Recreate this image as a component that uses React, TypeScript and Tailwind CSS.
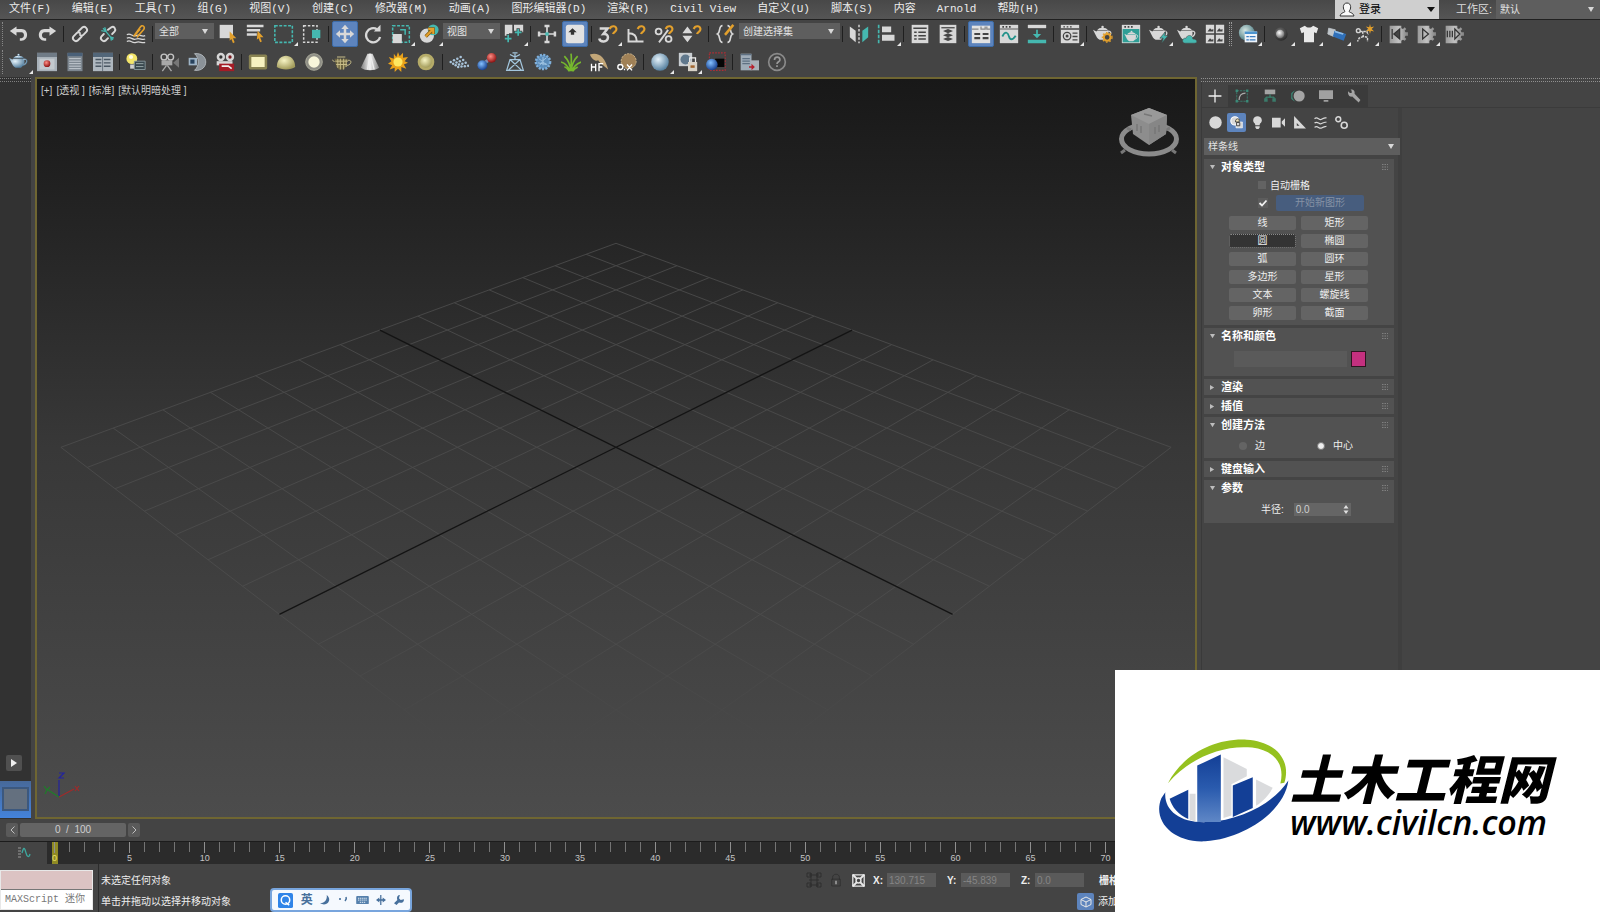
import React, { useState } from "react";
import type { ReactNode } from "react";

const L = "#d8d8d8";
const T = "#45b8b0";
const O = "#e3a02c";
const D = "#444444";

function Svg({ children, className = "h-6 w-6" }: { children: ReactNode; className?: string }) {
  return (
    <svg viewBox="0 0 24 24" className={className} fill="none" aria-hidden="true">
      {children}
    </svg>
  );
}

function Pot({ fill = L }: { fill?: string }) {
  return (
    <>
      <path d="M5 8h13c2 5-1 9-4 11H8c-3-1-4-4-5-6L0 7l4 2z" fill={fill} />
      <path d="M17 9c6-2 6 5-1 7" stroke={fill} strokeWidth="1.6" />
      <path d="M5 7.500c2-4 11-4 13 0z" fill={fill} />
      <circle cx="11.500" cy="3.500" r="1.500" fill={fill} />
    </>
  );
}

function Gear({ children }: { children: ReactNode }) {
  return (
    <>
      <path
        d="M2 2h14v3l2 1 2-2 2 2-2 2 1 2h3v4h-3l-1 2 2 2-2 2-2-1-2 1v3H2z"
        fill="url(#metal)"
      />
      {children}
    </>
  );
}

function Magnet() {
  return <path d="M14 6c2-5 9-4 8 1 0 2-3 2-4 5" stroke={O} strokeWidth="2.600" />;
}

const icons: Record<string, ReactNode> = {
  undo: <path d="M9 3v3h6c9 0 9 14 0 14h-2v-3h2c4 0 4-7 0-7H9v4L1 8.500z" fill={L} />,
  redo: <path d="M15 3v3H9c-9 0-9 14 0 14h2v-3H9c-4 0-4-7 0-7h6v4l8-5.500z" fill={L} />,
  link: (
    <g stroke={L} strokeWidth="2.300" strokeLinecap="round">
      <path d="m10 9 5-5c3-2 7 2 5 5l-4 4c-1 1-3 1-4 0" />
      <path d="m14 15-5 5c-3 2-7-2-5-5l4-4c1-1 3-1 4 0" />
    </g>
  ),
  unlink: (
    <>
      <g stroke={L} strokeWidth="2.300" strokeLinecap="round">
        <path d="m12 7 4-3c3-2 6 2 4 5l-3 3" />
        <path d="m12 17-3 3c-3 2-7-2-5-5l3-3" />
      </g>
      <path d="m6 5 12 14M8 4l2 5M4 8l5 1M14 15l5 2M15 15l1 5" stroke={T} strokeWidth="1.500" />
    </>
  ),
  bind: (
    <>
      <path
        d="M1 13c5-3 6 3 11 1s7 2 11 0M1 17c5-3 6 3 11 1s7 2 11 0M1 21c5-3 6 3 11 1s7 2 11 0"
        stroke={L}
        strokeWidth="1.500"
      />
      <path d="m9 15 8-11c2-4 7-1 4 3l-8 9m-2-3 6-7" stroke={O} strokeWidth="2" />
    </>
  ),
  select: (
    <>
      <path d="M2 1h16v16H2z" fill={L} />
      <path d="m14 9 8 8h-4l2 5-2 1-2-5-2 2z" fill={O} />
    </>
  ),
  byname: (
    <>
      <path d="M1 1h20v3H1zM1 6h16v3H1zM1 11h12v3H1z" fill={L} />
      <path d="m14 8 7 8h-4l2 5-2 1-2-5-2 2z" fill={O} />
    </>
  ),
  rect: <rect x="1" y="2" width="21" height="20" stroke={T} strokeWidth="1.900" strokeDasharray="3.500 1.800" />,
  crossing: (
    <>
      <rect x="2" y="2" width="16" height="20" stroke={L} strokeWidth="1.800" strokeDasharray="3 2" />
      <path d="M12 7h10v10H12z" fill={T} />
    </>
  ),
  move: <path d="m12 1 4.500 5h-3v4.500H18v-3l5 4.500-5 4.500v-3h-4.500V18h3L12 23l-4.500-5h3v-4.500H6v3L1 12l5-4.500v3h4.500V6h-3z" fill={L} />,
  rotate: (
    <>
      <path d="M17 6.500a8.500 8.500 0 1 0 3.500 9" stroke={L} strokeWidth="2.800" />
      <path d="M13 9h8V1z" fill={L} />
    </>
  ),
  scale: (
    <>
      <rect x="2" y="2" width="20" height="20" stroke={T} strokeWidth="1.800" strokeDasharray="3.500 1.800" />
      <path d="M2 12h11v11H2z" fill={L} />
      <path d="M11 7h6v6" stroke={T} strokeWidth="1.800" />
    </>
  ),
  place: (
    <>
      <circle cx="9.500" cy="14" r="8.500" fill={L} />
      <circle cx="17" cy="7" r="6.500" fill={T} />
      <path d="m8 15 9-9m-6 0h6v6" stroke="#8a5f12" strokeWidth="4" />
      <path d="m8 15 9-9m-6 0h6v6" stroke={O} strokeWidth="2.200" />
    </>
  ),
  pivot: (
    <>
      <path d="M1 1h9v10H6v3H1zM12 1h11v9h-5v3l-6-3z" fill={L} />
      <path d="M5 12v11M0 17.500h10M17 5v10M12 10h10" stroke={D} strokeWidth="4" />
      <path d="M5 13v9M1 17.500h8M17 6v8M13 10h8" stroke={T} strokeWidth="2" />
    </>
  ),
  manip: (
    <>
      <path d="M12 2v20M2 12h20" stroke={L} strokeWidth="2" />
      <path d="M10 10h4v4h-4z" fill={T} />
      <path d="M9 1h6v3H9zM9 20h6v3H9zM1 9h3v6H1zM20 9h3v6h-3z" fill={L} />
    </>
  ),
  keyboard: (
    <>
      <rect x="1" y="1" width="22" height="22" rx="3" fill="#e2e2e2" />
      <path d="m9 5 5 5h-3v3H7v-3H4z" fill="#333" />
    </>
  ),
  snap3: (
    <>
      <path d="M2 5.500h9.500L6.500 12c8-1 6.500 9.500 0 9-3 0-4.500-1-5-3.500" stroke={L} strokeWidth="3" />
      <Magnet />
    </>
  ),
  angle: (
    <>
      <path d="M3 6v15h18M3 11c7 0 10 4 10 10" stroke={L} strokeWidth="2.300" />
      <Magnet />
    </>
  ),
  percent: (
    <>
      <circle cx="5.500" cy="9" r="3.500" stroke={L} strokeWidth="2.200" />
      <circle cx="17.500" cy="18" r="3.500" stroke={L} strokeWidth="2.200" />
      <path d="M17 7 6 22" stroke={L} strokeWidth="2.200" />
      <Magnet />
    </>
  ),
  spinsnap: (
    <>
      <path d="m6.500 3 6 8h-12zM6.500 22l6-8h-12z" fill={L} />
      <Magnet />
    </>
  ),
  sets: (
    <>
      <path d="M9 2C4 2 7 10 3 12c4 2 1 10 6 10M15 2c5 0 2 8 6 10-4 2-1 10-6 10" stroke={L} strokeWidth="2" />
      <path d="m12 13 10-12" stroke={O} strokeWidth="3" />
    </>
  ),
  mirror: (
    <>
      <path d="m1 3 7 5v14l-7-6z" fill={L} />
      <path d="m23 3-7 5v14l7-6z" fill={T} />
      <path d="M12 1v22" stroke={L} strokeWidth="1.700" strokeDasharray="3 2" />
    </>
  ),
  align: (
    <>
      <path d="M2 1v22" stroke={T} strokeWidth="2" strokeDasharray="4 2" />
      <path d="M6 3h11v7H6zM6 13h15v7H6z" fill={L} />
    </>
  ),
  explorer: (
    <>
      <path d="M2 1h20v22H2z" fill={L} />
      <path d="M4 5h16M5 10h3m2 0h9M5 14h3m2 0h9M5 18h3m2 0h9" stroke={D} strokeWidth="1.800" />
    </>
  ),
  layers: (
    <>
      <path d="M2 1h20v22H2z" fill={L} />
      <path d="M4 4.500h16" stroke={D} strokeWidth="1.500" />
      <path d="m12 6 6 2.500-6 2.500-6-2.500zM12 11l6 2.500-6 2.500-6-2.500zM12 15.500l6 2.500-6 2.500-6-2.500z" fill={D} />
    </>
  ),
  ribbon: (
    <>
      <path d="M1 2h22v21H1z" fill="#e2e2e2" />
      <path d="M1 6h8m3-3v3h5V3m2 0v3h4" stroke="#888" strokeWidth="1.500" />
      <path d="M4 12h7m3 0h7M4 17h7m3 0h7" stroke={D} strokeWidth="2.600" />
    </>
  ),
  curve: (
    <>
      <path d="M1 1h22v22H1z" fill={L} />
      <path d="M1 6h22" stroke={D} />
      <path d="M4 3.500h2m2 0h2m2 0h2" stroke={D} strokeWidth="2" />
      <path d="M4 15c4-8 7-4 8 0s4 5 8-1" stroke="#23928a" strokeWidth="2.200" />
    </>
  ),
  schematic: (
    <>
      <path d="M1 1h22v4H1z" fill={L} />
      <path d="M1 19h22v4H1zM11 7h2v5h4l-5 5-5-5h4z" fill={T} />
    </>
  ),
  material: (
    <>
      <path d="M1 1h22v22H1z" fill={L} />
      <path d="M1 6h22M4 3.500h2m2 0h2m2 0h2M15 11h6m-6 4h6m-6 4h6" stroke={D} strokeWidth="1.600" />
      <circle cx="8.500" cy="14.500" r="4.500" stroke={D} strokeWidth="1.500" />
      <circle cx="8.500" cy="14.500" r="1.800" fill={D} />
    </>
  ),
  rsetup: (
    <>
      <Pot />
      <circle cx="17" cy="16" r="4" fill={D} stroke={O} strokeWidth="2.400" />
      <circle cx="17" cy="16" r="5.800" stroke={O} strokeWidth="1.500" strokeDasharray="2 2.200" />
    </>
  ),
  rframe: (
    <>
      <path d="M1 1h22v22H1z" fill={L} />
      <path d="M2 6h20v16H2z" fill="#2f9e96" />
      <path d="M4 3.500h2m2 0h2m2 0h2" stroke={D} strokeWidth="2" />
      <g transform="translate(4 6.500) scale(.75)"><Pot /></g>
    </>
  ),
  render: (
    <>
      <Pot />
      <path d="m20 9-7 8h4l-2 6 8-9h-4z" fill={T} stroke={D} strokeWidth=".8" />
    </>
  ),
  rcloud: (
    <>
      <Pot />
      <path d="M10 23c-5 0-4-7 1-6 1-5 8-4 8 1 6 0 6 5 2 5z" fill={T} stroke={D} strokeWidth=".6" />
    </>
  ),
  gallery: (
    <>
      <path d="M1 1h10v10H1zM13 1h10v10H13zM1 13h10v10H1zM13 13h10v10H13z" fill={L} />
      <path d="m3 9 3-4 2 2 2-1v3zM14 9l3-4 2 2 2-1v3zM3 21l3-4 2 2 2-1v3zM14 21l3-4 2 2 2-1v3z" fill={D} />
    </>
  ),
  globe: (
    <>
      <circle cx="10.500" cy="10.500" r="9.500" fill="url(#globe)" />
      <path d="M8 9h15v13H8z" fill="#eef4fa" />
      <path d="M8 9h15v3H8z" fill="#4b94cf" />
      <path d="M10 15h3m1 0h7m-11 4h3m1 0h7" stroke="#3a7cc0" strokeWidth="1.500" />
    </>
  ),
  darkball: (
    <>
      <circle cx="12" cy="12" r="8" fill="url(#dark)" />
      <circle cx="11" cy="12" r="5" fill="url(#chrome)" />
    </>
  ),
  shirt: <path d="M7 2c3 3 7 3 10 0l6 3-2 6-3-1v12H6V10l-3 1-2-6z" fill="#e9e9e9" />,
  tube: (
    <>
      <path d="m2 5 8 2-2 8-7-3z" fill="#bfc5ca" stroke="#bfc5ca" strokeLinejoin="round" />
      <path d="m9 8 14 4-3 8L7 15z" fill="#2f6fb8" />
      <path d="m10 8 10 3-1 2-10-3z" fill="#8fbde8" />
    </>
  ),
  runner: (
    <>
      <g stroke="#d5d5d5" strokeWidth="1.700">
        <circle cx="4" cy="8" r="2.300" />
        <path d="M6 9h8l3-3M9 9l1 6 5 1v5M10 15l-5 2-2 4M14 9l2 4" strokeDasharray="3 1" />
      </g>
      <path d="m18 0 1 4 4-1-3 3 3 3-4-1-1 4-1-4-4 1 3-3-3-3 4 1z" fill={O} />
    </>
  ),
  gprev: <Gear><path d="M5 6v12M14 6v12l-7-6z" fill="#444" stroke="#333" strokeWidth="1.500" /></Gear>,
  gplay: <Gear><path d="m8 6 7 6-7 6z" stroke="#333" strokeWidth="1.500" /></Gear>,
  gstep: <Gear><path d="M4 8v8m3-8v8M10 8v8m3-10 6 6-6 6z" stroke="#333" strokeWidth="1.500" /></Gear>,
  // second toolbar
  blueteapot: <Pot fill="url(#ice)" />,
  frame: (
    <>
      <path d="M0 1h24v22H0z" fill="#a9b2ba" />
      <path d="M0 1h24v5H0z" fill="#707b86" />
      <path d="M3 8h18v13H3z" fill="#c3c9ce" />
      <circle cx="12" cy="14" r="4" fill="url(#red)" />
    </>
  ),
  list1: (
    <>
      <path d="M3 1h18v22H3z" fill="#7d8790" />
      <path d="M3 1h18v4H3z" fill="#4a6078" />
      <path d="M5 8h14M5 11h14M5 14h14M5 17h14M5 20h14" stroke="#d3d9de" />
    </>
  ),
  list2: (
    <>
      <path d="M0 1h24v22H0z" fill="#aeb7bf" />
      <path d="M0 1h24v5H0z" fill="#526679" />
      <path d="M3 9h7m3 0h8M3 13h7m3 0h8M3 17h7m3 0h8" stroke="#4a5763" strokeWidth="1.700" />
      <path d="M11.500 6v17" stroke="#5c6873" />
    </>
  ),
  lightlist: (
    <>
      <circle cx="7" cy="8" r="6.500" fill="#f3e56a" />
      <circle cx="6" cy="6" r="2.500" fill="#fffce0" />
      <path d="M5 15h5v5H5z" fill="#cfcfcf" />
      <path d="M10 11h13v10H10z" fill="#39474e" stroke="#8fa0a5" />
      <path d="M12 14h9M12 17.500h9" stroke="#a8b8b8" />
    </>
  ),
  camera: (
    <>
      <circle cx="6" cy="6" r="3.500" stroke="#c4c4c4" strokeWidth="1.700" />
      <circle cx="14" cy="6" r="3.500" stroke="#c4c4c4" strokeWidth="1.700" />
      <path d="M3 10h13v6H3z" fill="#a8a8a8" />
      <path d="m17 13 7-6v12z" fill="#777" />
      <path d="m9 16-5 7m6-7 5 7" stroke="#aaa" strokeWidth="1.600" />
    </>
  ),
  cam2: (
    <>
      <path d="M9 2c18-2 18 22 0 20 6-5 6-15 0-20z" fill="#8b9298" stroke="#b9bfc4" />
      <path d="M2 7h10v9H2z" fill="#9fb4c6" />
      <path d="M4 9h5v5H4z" fill="#28425c" />
    </>
  ),
  cam3: (
    <>
      <circle cx="7" cy="6" r="5" fill="#d6d6d6" />
      <circle cx="18" cy="6" r="5" fill="#d6d6d6" />
      <circle cx="7" cy="6" r="2" fill="#333" />
      <circle cx="18" cy="6" r="2" fill="#7a1a20" />
      <path d="M2 11h19v5H2z" fill="#d8d8d8" />
      <path d="M5 14h18v9H5z" fill="#a51c26" />
      <path d="M8 17h8l4 3" stroke="#eee" strokeWidth="2" />
    </>
  ),
  plane: (
    <>
      <rect x="1" y="3" width="22" height="18" rx="2" fill="#8a8453" />
      <path d="M4 6h16v12H4z" fill="#f7f2c0" />
    </>
  ),
  dome: <path d="M1 18C1 0 23 0 23 18c-5 4-17 4-22 0z" fill="url(#cream)" />,
  disc: (
    <>
      <circle cx="12" cy="12" r="10" fill="#8f8f86" stroke="#b0b0a0" />
      <circle cx="12" cy="12" r="6.800" fill="#f8f6da" />
    </>
  ),
  meshpot: (
    <>
      <path d="M3 8h16l-2 9-3 4H8l-3-4z" fill="#6b6340" />
      <path d="M7 8v11m3-11v13m4-13v13m3-12v9M4 11h15M5 15h13M3 12 0 9m19 1c6-1 4 6-1 6M6 6h10" stroke="#c8bd88" strokeWidth="1.200" />
    </>
  ),
  cone: (
    <>
      <path d="M9 2h6l8 17c-5 4-17 4-22 0z" fill="url(#cone)" />
      <path d="M12 2 9 21M12 2l5 19" stroke="#eee" strokeWidth="1.500" />
    </>
  ),
  sun: (
    <>
      <path d="m12 0 2 5 4-4v6l6-1-4 5 4 2-5 2 3 5-6-2v6l-4-4-4 4v-5l-6 2 3-5-5-2 4-3-3-5 6 2V2l3 4z" fill="#eaa21a" />
      <circle cx="12" cy="12" r="5.500" fill="#ffe760" />
    </>
  ),
  yellowball: (
    <>
      <circle cx="12" cy="12" r="10" fill="#b5ab68" />
      <circle cx="12" cy="12" r="7" fill="url(#cream)" />
    </>
  ),
  particles: (
    <g fill="#a9c4da">
      {[0, 1, 2, 3].map((r) =>
        [0, 1, 2, 3].map((c) => (
          <circle key={`${r}${c}`} cx={2 + c * 4 + r * 3} cy={12 - c * 2 + r * 2 + (c * r) / 2} r="1.500" />
        )),
      )}
    </g>
  ),
  molecule: (
    <>
      <path d="m8 14 8-6" stroke="#7e8fb0" strokeWidth="4" />
      <circle cx="6.500" cy="16" r="6" fill="url(#blue)" />
      <circle cx="17.500" cy="7" r="5.800" fill="url(#red)" />
    </>
  ),
  tower: (
    <path
      d="M2 22 6 9h12l4 13zM6 9l14 13M18 9 4 22M12 9V2M6 3l6 3 6-3M9 1h6"
      stroke="#a3c6dd"
      strokeWidth="1.500"
    />
  ),
  snowball: (
    <>
      <circle cx="12" cy="12" r="8.500" fill="#5b8dbb" stroke="#7fb0dc" strokeWidth="3" strokeDasharray="2.500 1.500" />
      <path d="m7 8 4 3 5-4m-8 9 3-4 6 3m-5-9v10m-6-3 10 2" stroke="#a8cbe8" />
    </>
  ),
  grass: (
    <path
      d="M12 23C11 14 8 9 4 5M12 23c0-9 1-16 0-21M12 23c1-9 4-14 8-18M11 23C8 16 4 13 0 12M13 23c2-6 6-9 11-11M10 23c-2-3-4-5-6-5m10 5c2-3 4-4 6-5"
      stroke="#76b82d"
      strokeWidth="2"
    />
  ),
  hair: (
    <>
      <path d="M1 3c10-3 18 2 22 18-6-5-9-7-12-11C8 12 3 8 1 3z" fill="#c2a678" />
      <path d="M3 14v9m5-9v9m-5-5h5m4 5v-9h5m-5 4h4" stroke="#fff" strokeWidth="1.600" />
    </>
  ),
  shell: (
    <>
      <circle cx="14" cy="11" r="9" fill="#a08157" stroke="#d6bd92" strokeDasharray="3 1" />
      <circle cx="4" cy="18" r="3" stroke="#fff" strokeWidth="1.600" />
      <path d="M9 22v-2m3-5 6 7m0-7-6 7" stroke="#fff" strokeWidth="1.600" />
    </>
  ),
  glass: <circle cx="12" cy="12" r="10.500" fill="url(#ice)" />,
  matlib: (
    <>
      <path d="M1 1h16v16H1z" fill="#c9ced2" />
      <circle cx="9" cy="9" r="6" fill="#60788c" />
      <path d="M12 12h11v11H12z" fill="#d8d3c8" />
      <path d="M14 12V7h7v5" stroke="#eee" strokeWidth="1.500" />
      <path d="M15 16h5v3h-5z" fill="#a1662f" />
    </>
  ),
  dynamics: (
    <>
      <rect x="4" y="1" width="19" height="21" stroke="#b12d34" strokeWidth="1.300" strokeDasharray="2 1.500" />
      <path d="M11 8h11v10H11z" fill="#050505" />
      <circle cx="7" cy="15" r="7" fill="url(#blue)" />
    </>
  ),
  exportlist: (
    <>
      <path d="M2 2h13v20H2z" fill="#9facb8" />
      <path d="M2 3h13M4 8h9M4 11h9M4 14h9" stroke="#5f7183" strokeWidth="1.500" />
      <path d="M14 10h10v12H14z" fill="#aab2b9" />
      <path d="M12 17h3v-3l4 4-4 4v-3h-3z" fill="#b6202c" />
    </>
  ),
  help: (
    <>
      <circle cx="12" cy="12" r="10" stroke="#8a8a8a" strokeWidth="2" />
      <path d="M9 9.500c0-4.500 6.500-4.500 6.500 0 0 2.500-3.500 2-3.500 5m0 1.500v2" stroke="#9a9a9a" strokeWidth="2" />
    </>
  ),
  // command panel tabs
  create: <path d="M12 1v22M1 12h22" stroke="#f0f0f0" strokeWidth="2.200" />,
  modify: (
    <>
      <rect x="3" y="3" width="18" height="18" stroke="#3b8a78" strokeWidth="1.300" strokeDasharray="4 1.500" />
      <path d="M1 1h4v4H1zM19 1h4v4h-4zM1 19h4v4H1zM19 19h4v4h-4z" fill="#3b8a78" />
      <path d="M7 19c0-8 4-12 11-12" stroke="#aaa" strokeWidth="2.200" />
    </>
  ),
  hierarchy: (
    <>
      <path d="M3 1h18v8H3z" fill="#a5a5a5" />
      <path d="M12 9v5M5 19v-5h14v5" stroke="#3b9a80" strokeWidth="1.500" />
      <path d="M2 16h6v6H2zM16 16h6v6h-6z" fill="#3b7a6a" />
    </>
  ),
  motion: (
    <>
      <circle cx="14" cy="12" r="9.500" fill="#a5a5a5" />
      <path d="M6 3c-6 5-6 13 0 18M3 5c-4 5-4 9 0 14" stroke="#3b8a78" strokeWidth="1.500" />
    </>
  ),
  display: <path d="M0 2h24v15H0zM8 19h8v3H8z" fill="#a0a0a0" />,
  utilities: <path d="M2 4 5 7h3V3L6 1c5-1 8 2 7 7l10 11-3 4L9 13c-5 1-8-3-7-9z" fill="#a5a5a5" />,
  // create categories
  geometry: <circle cx="12" cy="12" r="11.500" fill={L} />,
  shapes: (
    <>
      <circle cx="9" cy="9" r="7.500" fill={L} stroke="#fff" strokeWidth="2" />
      <path d="M11 11h12v11H11z" fill={L} stroke="#fff" />
      <path d="M10 11h7V6c-4-2-7 0-7 5z" fill="#f0e3b8" stroke="#333" strokeWidth="1.500" />
      <path d="M12 12h6v6h-6z" stroke="#333" strokeWidth="1.500" />
    </>
  ),
  lights: <path d="M8 17c0-4-4-4-4-9 0-10 16-10 16 0 0 5-4 5-4 9zM8 19h8v2l-2 3h-4l-2-3z" fill={L} />,
  cameras: <path d="M0 3h16v18H0zM18 10l6-6v16l-6-6z" fill={L} />,
  helpers: <path d="M2 0v23h22zM7 13l5 5H7z" fill={L} fillRule="evenodd" />,
  warps: (
    <path
      d="M1 5c6-5 8 4 13 1s6-2 9-3M1 13c6-5 8 4 13 1s6-2 9-3M1 21c6-5 8 4 13 1s6-2 9-3"
      stroke={L}
      strokeWidth="2.200"
    />
  ),
  systems: (
    <>
      <circle cx="6" cy="6" r="4.500" stroke={L} strokeWidth="2.800" />
      <circle cx="17" cy="17" r="5.500" stroke={L} strokeWidth="3" />
    </>
  ),
};

function Tool({ name, fly, on }: { name: string; fly?: boolean; on?: boolean }) {
  return (
    <button
      type="button"
      aria-label={name}
      aria-pressed={on}
      className="relative flex h-7 w-7 shrink-0 items-center justify-center"
    >
      <span
        className={`flex h-[26px] w-[26px] items-center justify-center rounded-xs ${
          on ? "border border-[#3d6ca8] bg-[#5d84bd]" : ""
        }`}
      >
        <Svg className="h-5 w-5 shrink-0">{icons[name]}</Svg>
      </span>
      {fly && (
        <svg viewBox="0 0 4 4" className="absolute right-0 bottom-0.5 h-1 w-1" aria-hidden="true">
          <path d="M4 0v4H0z" fill="#e8e8e8" />
        </svg>
      )}
    </button>
  );
}

function Sep() {
  return (
    <span className="flex h-7 w-[5px] shrink-0 items-center justify-center">
      <span className="h-4 w-px bg-[#1f1f1f]" />
    </span>
  );
}

function Drop({ label, value, className }: { label: string; value: string; className: string }) {
  return (
    <span className={`relative flex shrink-0 items-center bg-[#5e5e5e] ${className}`}>
      <select
        aria-label={label}
        className="h-full w-full appearance-none truncate bg-transparent pr-4 pl-1 text-[10px] text-[#e2e2e2] outline-none"
      >
        <option>{value}</option>
      </select>
      <svg viewBox="0 0 6 5" className="pointer-events-none absolute right-1.5 h-[5px] w-1.5" aria-hidden="true">
        <path d="M0 0h6L3 5z" fill="#d8d8d8" />
      </svg>
    </span>
  );
}

// "|" is a separator and a trailing "+" marks a fly-out button.
function tools(list: string[]) {
  return list.map((t, i) => {
    if (t === "|") return <Sep key={i} />;
    const fly = t.endsWith("+");
    const name = fly ? t.slice(0, -1) : t;
    return <Tool key={i} name={name} fly={fly} on={["move", "keyboard", "ribbon"].includes(name)} />;
  });
}

const menus = [
  "文件(F)", "编辑(E)", "工具(T)", "组(G)", "视图(V)", "创建(C)", "修改器(M)", "动画(A)", "图形编辑器(D)",
  "渲染(R)", "Civil View", "自定义(U)", "脚本(S)", "内容", "Arnold", "帮助(H)",
];

function MenuBar() {
  return (
    <header className="flex h-5 shrink-0 items-center justify-between border-b border-[#202020] bg-linear-to-b from-[#484848] to-[#555555]">
      <nav className="flex gap-[21px] pb-0.5 pl-[9px] font-['Liberation_Mono','Noto_Sans_CJK_SC',monospace] text-[11px] leading-4 text-[#ececec]">
        {menus.map((m) => (
          <button key={m} type="button" className="whitespace-nowrap">
            {m}
          </button>
        ))}
      </nav>
      <div className="flex h-full items-center">
        <button type="button" className="flex h-full w-[104px] items-center gap-1 bg-[#cfcfcf] px-1 text-[11px] text-black">
          <svg viewBox="0 0 16 16" className="h-4 w-4" fill="none" aria-hidden="true">
            <path d="M8 1c5 0 4 7 2 8 0 2 4 1 5 5H1c1-4 5-3 5-5-2-1-3-8 2-8z" fill="#fafafa" stroke="#333" />
          </svg>
          <span className="flex-1 text-left">登录</span>
          <svg viewBox="0 0 8 5" className="h-[5px] w-2" aria-hidden="true">
            <path d="M0 0h8L4 5z" fill="#111" />
          </svg>
        </button>
        <span className="w-[57px] pr-1 text-right text-[11px] text-[#dddddd]">工作区:</span>
        <Drop label="工作区" value="默认" className="h-full w-[104px]" />
      </div>
    </header>
  );
}

function Toolbars() {
  return (
    <div className="shrink-0 overflow-hidden bg-[#444444] pb-px">
      <div className="flex h-7 items-center">
        <span className="h-6 w-[3px] border-r border-dotted border-[#888888]" />
        <span className="w-0.5" />
        {tools(["undo", "redo", "|", "link", "unlink", "bind", "|"])}
        <Drop label="选择过滤器" value="全部" className="mb-1.5 h-4 w-[59px]" />
        {tools(["select", "byname", "rect+", "crossing", "|", "move", "rotate", "scale+", "place+"])}
        <Drop label="参考坐标系" value="视图" className="mb-1.5 h-4 w-[57px]" />
        {tools(["pivot+", "|", "manip", "keyboard", "|", "snap3+", "angle", "percent", "spinsnap", "|", "sets"])}
        <Drop label="命名选择集" value="创建选择集" className="mb-1.5 h-4 w-[101px]" />
        {tools([
          "|", "mirror", "align+", "|", "explorer", "layers", "|", "ribbon", "curve", "schematic", "|", "material+", "|",
          "rsetup", "rframe", "render+", "rcloud", "gallery",
        ])}
        <span className="mr-0.5 h-6 w-[3px] border-x border-dotted border-[#999999]" />
        {tools(["globe+", "|", "darkball+", "shirt+", "tube+", "runner+", "|", "gprev", "gplay+", "gstep"])}
      </div>
      <div className="flex h-7 items-center">
        <span className="h-6 w-[3px] border-r border-dotted border-[#888888]" />
        <span className="w-0.5" />
        {tools([
          "blueteapot+", "frame", "list1", "list2", "|", "lightlist", "|", "camera", "cam2", "cam3", "|", "plane", "dome",
          "disc", "meshpot", "cone", "sun", "yellowball", "|", "particles", "molecule", "tower", "snowball", "grass", "hair",
          "shell", "|", "glass+", "matlib+", "dynamics", "|", "exportlist", "help",
        ])}
      </div>
    </div>
  );
}

// Projects a home-grid point (each axis in cells, -7..7) to viewport units.
function project(u: number, v: number): [number, number] {
  const w = 2.85 + (u + v) / 14;
  return [616 + (113 * (u - v)) / w, -338 + 2238 / w];
}

function segment(a: [number, number], b: [number, number]) {
  return `M${a[0].toFixed(1)} ${a[1].toFixed(1)}L${b[0].toFixed(1)} ${b[1].toFixed(1)}`;
}

function Viewport() {
  const steps = Array.from({ length: 15 }, (_, i) => i - 7);
  const grid = steps
    .filter((s) => s !== 0)
    .map((s) => segment(project(s, -7), project(s, 7)) + segment(project(-7, s), project(7, s)))
    .join("");
  const axes = segment(project(0, -7), project(0, 7)) + segment(project(-7, 0), project(7, 0));
  return (
    <main className="relative min-w-0 flex-1 overflow-hidden border-2 border-[#6f6632] bg-linear-to-b from-[#181818] via-[#383838] to-[#4c4c4c]">
      <svg
        viewBox="37 79 1158 738"
        preserveAspectRatio="none"
        className="absolute inset-0 h-full w-full"
        fill="none"
        aria-label="透视"
      >
        <path d={grid} stroke="url(#gridfade)" />
        <path d={axes} stroke="#141414" strokeWidth="1.300" />
        <g strokeWidth="1.200">
          <path d="M59 797V780" stroke="#2222a0" />
          <path d="m59 797 15-8m1-3 4 5m0-5-4 5" stroke="#a02a2a" />
          <path d="m59 797-11-7m-4-4 3 4 3-3m-3 3-2 4" stroke="#1f7d2a" />
          <path d="M59 773h5l-5 5h5" stroke="#2222a0" />
        </g>
        <ellipse cx="1149" cy="139" rx="27.500" ry="15" stroke="#8b8b8b" strokeWidth="5" />
        <path d="m1121 153 4-3M1176 153l-4-3M1127 128l4 2M1170 128l-4 2" stroke="#777" strokeWidth="3" />
        <path d="m1149 108 18 7-1 19-17 11-16-11-2-19z" fill="#8d8d8d" />
        <path d="m1149 108 18 7-18 9-18-9z" fill="#999999" />
        <path d="M1149 124v21l17-11 1-19z" fill="#868686" />
        <path d="m1144 114 8 2M1137 124v7m4-5v7M1155 127v7m4-9v7" stroke="#777777" strokeWidth="1.500" />
      </svg>
      <div className="relative flex gap-1 px-1 pt-1 text-[10px] leading-4 text-[#cccccc]">
        <button type="button">[+]</button>
        <button type="button">[透视 ]</button>
        <button type="button">[标准]</button>
        <button type="button">[默认明暗处理 ]</button>
      </div>
    </main>
  );
}

function Rollout({ title, start, children }: { title: string; start: boolean; children?: ReactNode }) {
  const [open, setOpen] = useState(start);
  return (
    <section className="bg-[#525252]">
      <button type="button" onClick={() => setOpen(!open)} className="flex h-4 w-full items-center gap-1.5 px-1.5">
        <svg viewBox="0 0 6 6" className="h-[5px] w-[5px]" aria-hidden="true">
          <path d={open ? "M0 0h6L3 5z" : "M0 0l5 3-5 3z"} fill="#bdbdbd" />
        </svg>
        <span className="flex-1 text-left text-[11px] leading-4 font-bold text-white">{title}</span>
        <svg viewBox="0 0 6 6" className="h-1.5 w-1.5" aria-hidden="true">
          <path d="M0 .5h6M0 3h6M0 5.500h6" stroke="#808080" strokeDasharray="1.500 1" />
        </svg>
      </button>
      {open && children}
    </section>
  );
}

const shapes = ["线", "矩形", "圆", "椭圆", "弧", "圆环", "多边形", "星形", "文本", "螺旋线", "卵形", "截面"];

function CommandPanel() {
  const [shape, setShape] = useState("圆");
  return (
    <aside className="flex w-[403px] shrink-0 flex-col bg-[#444444] pt-px pl-1">
      <div className="h-1 border-y border-dotted border-[#909090]" />
      <div className="flex flex-1 flex-col border-l border-[#3a3a3a] pt-[3px]">
        <div className="flex border-b border-[#3b3b3b]">
          {["create", "modify", "hierarchy", "motion", "display", "utilities"].map((t) => (
            <button
              key={t}
              type="button"
              aria-label={t}
              className={`flex h-[22px] items-center justify-center ${t === "create" ? "w-[26px]" : "w-7 bg-[#3b3b3b]"}`}
            >
              <Svg className="h-3.5 w-3.5">{icons[t]}</Svg>
            </button>
          ))}
        </div>
        <div className="flex flex-1">
          <div className="w-[200px] border-r-4 border-[#3f3f3f] pl-0.5">
            <div className="mb-0.5 flex h-7 items-center gap-0.5 pl-0.5">
              {["geometry", "shapes", "lights", "cameras", "helpers", "warps", "systems"].map((c) => (
                <button
                  key={c}
                  type="button"
                  aria-label={c}
                  className={`flex h-[19px] w-[19px] items-center justify-center rounded-xs ${c === "shapes" ? "bg-[#5d84bd]" : ""}`}
                >
                  <Svg className="h-[13px] w-[13px]">{icons[c]}</Svg>
                </button>
              ))}
            </div>
            <Drop label="图形类别" value="样条线" className="h-[17px] w-[196px]" />
            <div className="mt-1 flex w-[190px] flex-col gap-[3px]">
              <Rollout title="对象类型" start>
                <div className="pt-px pb-[5px] text-[10px] text-[#eeeeee]">
                  <label className="flex h-[18px] items-center gap-1 pl-[54px]">
                    <input type="checkbox" className="h-2 w-2 appearance-none bg-[#636363] checked:bg-[#dddddd]" />
                    自动栅格
                  </label>
                  <div className="flex h-[18px] items-center gap-2 pl-[54px]">
                    <span className="relative flex h-2.5 w-2.5">
                      <input
                        type="checkbox"
                        defaultChecked
                        aria-label="开始新图形"
                        className="peer h-2.5 w-2.5 appearance-none bg-[#5c5c5c]"
                      />
                      <svg
                        viewBox="0 0 10 10"
                        className="pointer-events-none absolute inset-0 hidden h-2.5 w-2.5 peer-checked:block"
                        fill="none"
                        aria-hidden="true"
                      >
                        <path d="m1.500 5 2.500 2.500L8.500 2.500" stroke="#f0f0f0" strokeWidth="1.800" />
                      </svg>
                    </span>
                    <button type="button" className="h-4 w-[88px] rounded-xs bg-[#475d7e] leading-4 text-[#8592a5]">
                      开始新图形
                    </button>
                  </div>
                  <div className="grid grid-cols-[67px_67px] gap-x-[5px] gap-y-1 pt-1 pl-[25px]">
                    {shapes.map((s) => (
                      <button
                        key={s}
                        type="button"
                        aria-pressed={s === shape}
                        onClick={() => setShape(s)}
                        className={`h-3.5 rounded-xs leading-[14px] ${
                          s === shape
                            ? "bg-[#343434] outline-1 -outline-offset-1 outline-[#8a8a8a] outline-dotted"
                            : "bg-[#646464]"
                        }`}
                      >
                        {s}
                      </button>
                    ))}
                  </div>
                </div>
              </Rollout>
              <Rollout title="名称和颜色" start>
                <div className="flex gap-1 pt-[7px] pb-[9px] pl-[30px]">
                  <input
                    aria-label="名称"
                    className="h-4 w-[113px] bg-[#5a5a5a] px-1 text-[10px] text-[#eeeeee] outline-none"
                  />
                  <button type="button" aria-label="颜色" className="h-4 w-[15px] border border-[#2e1420] bg-[#c4307f]" />
                </div>
              </Rollout>
              <Rollout title="渲染" start={false} />
              <Rollout title="插值" start={false} />
              <Rollout title="创建方法" start>
                <div className="grid h-[25px] grid-cols-[78px_1fr] items-center pl-[35px] text-[10px] text-[#eeeeee]">
                  <label className="flex items-center gap-2">
                    <input
                      type="radio"
                      name="method"
                      className="h-2 w-2 appearance-none rounded-full bg-[#646464] checked:bg-[#eeeeee]"
                    />
                    边
                  </label>
                  <label className="flex items-center gap-2">
                    <input
                      type="radio"
                      name="method"
                      defaultChecked
                      className="h-2 w-2 appearance-none rounded-full border border-[#777777] bg-[#646464] checked:bg-[#eeeeee]"
                    />
                    中心
                  </label>
                </div>
              </Rollout>
              <Rollout title="键盘输入" start={false} />
              <Rollout title="参数" start>
                <label className="flex h-[27px] items-center gap-2.5 pl-[57px] text-[10px] text-[#eeeeee]">
                  半径:
                  <span className="flex h-[13px] w-[57px] items-center bg-[#656565] pr-0.5">
                    <input
                      defaultValue="0.0"
                      className="h-full w-full min-w-0 bg-transparent px-0.5 text-[10px] text-[#cfcfcf] outline-none"
                    />
                    <svg viewBox="0 0 6 9" className="h-[9px] w-1.5 shrink-0" aria-hidden="true">
                      <path d="M3 0l2.500 3.500h-5zM3 9 .500 5.500h5z" fill="#e0e0e0" />
                    </svg>
                  </span>
                </label>
              </Rollout>
            </div>
          </div>
        </div>
      </div>
    </aside>
  );
}

function LeftDock() {
  return (
    <div className="flex w-[35px] shrink-0 flex-col border-r-4 border-[#444444] bg-[#323232] pt-px">
      <div className="h-1 border-y border-dotted border-[#808080]" />
      <div className="mt-auto flex flex-col gap-2.5 pb-px">
        <button
          type="button"
          aria-label="展开"
          className="ml-1.5 flex h-4 w-4 items-center justify-center rounded-xs bg-[#505050]"
        >
          <svg viewBox="0 0 6 8" className="h-2 w-1.5" aria-hidden="true">
            <path d="M0 0l6 4-6 4z" fill="#f0f0f0" />
          </svg>
        </button>
        <button
          type="button"
          aria-label="视口布局"
          className="flex h-[37px] w-[31px] flex-col bg-linear-to-b from-[#47699a] to-[#4383dc] px-0.5 pt-1.5"
        >
          <span className="h-6 w-full border-2 border-[#3c587e] bg-[#64707f]" />
        </button>
      </div>
    </div>
  );
}

function Timeline() {
  const frames = Array.from({ length: 101 }, (_, i) => i);
  return (
    <div className="shrink-0 bg-[#444444]">
      <div className="flex h-[23px] items-center gap-0.5 border-b border-[#1c1c1c] pl-1.5 text-[10px] text-[#cfcfcf]">
        <button type="button" aria-label="上一帧" className="flex h-3.5 w-3 items-center justify-center rounded-xs bg-[#5a5a5a]">
          <svg viewBox="0 0 5 8" className="h-2 w-[5px]" fill="none" aria-hidden="true">
            <path d="M4.500.5 1 4l3.500 3.500" stroke="#c0c0c0" />
          </svg>
        </button>
        <button type="button" className="h-3.5 w-[106px] rounded-xs bg-[#646464] text-center leading-[14px]">
          0&nbsp; / &nbsp;100
        </button>
        <button type="button" aria-label="下一帧" className="flex h-3.5 w-3 items-center justify-center rounded-xs bg-[#5a5a5a]">
          <svg viewBox="0 0 5 8" className="h-2 w-[5px]" fill="none" aria-hidden="true">
            <path d="M.5.5 4 4 .5 7.500" stroke="#c0c0c0" />
          </svg>
        </button>
      </div>
      <div className="flex h-[22px]">
        <button type="button" aria-label="迷你曲线编辑器" className="flex w-[47px] items-center justify-center">
          <svg viewBox="0 0 14 12" className="h-3 w-3.5" fill="none" aria-hidden="true">
            <path d="M1 1h3M1 4h3M1 7h3M1 10h3" stroke="#9a9a9a" />
            <path d="M5 6c2-8 3-4 4 0s3 5 4 1" stroke="#3ea79e" strokeWidth="1.300" />
          </svg>
        </button>
        <div className="flex min-w-0 flex-1 bg-[#2b2b2b] pr-9">
          {frames.map((f) => (
            <div key={f} className="flex min-w-0 flex-1 justify-center">
              {f % 5 === 0 ? (
                <span className={`flex h-full flex-col items-center ${f === 0 ? "w-1.5 bg-[#8f8a24]" : ""}`}>
                  <span className="h-[11px] w-px shrink-0 bg-[#8f8f8f]" />
                  <span className={`text-[9px] leading-[11px] ${f === 0 ? "text-[#e8e06a]" : "text-[#c4c4c4]"}`}>{f}</span>
                </span>
              ) : (
                <span className="h-2.5 w-px bg-[#747474]" />
              )}
            </div>
          ))}
        </div>
      </div>
    </div>
  );
}

function Coord({ axis, value }: { axis: string; value: string }) {
  return (
    <label className="flex items-center gap-1 pr-[11px] font-bold text-[#eeeeee]">
      <span className="w-[10px] whitespace-nowrap">{axis}:</span>
      <input
        defaultValue={value}
        disabled
        className="h-3.5 w-[49px] bg-[#5a5a5a] px-0.5 text-[10px] font-normal text-[#858585]"
      />
    </label>
  );
}

function StatusBar() {
  return (
    <footer className="relative flex h-12 shrink-0 bg-[#444444] text-[10px] text-[#eeeeee]">
      <div className="mt-1.5 flex h-10 w-[93px] flex-col border border-[#e8e8e8] bg-white">
        <div className="h-[18px] bg-[#dcc3c3]" />
        <input
          aria-label="MAXScript"
          placeholder="MAXScript 迷你"
          className="h-5 w-full border-t border-[#777777] bg-white px-1 font-['Liberation_Mono','Noto_Sans_CJK_SC',monospace] text-[10px] text-[#777777] outline-none placeholder:text-[#777777]"
        />
      </div>
      <div className="ml-[5px] border-l border-[#2c2c2c] pl-0.5">
        <p className="mt-[9px] leading-4">未选定任何对象</p>
        <p className="mt-[5px] leading-4">单击并拖动以选择并移动对象</p>
      </div>
      <div className="absolute top-2 left-[806px] flex h-4 items-center">
        <div className="flex w-[67px] items-center gap-2">
          <svg viewBox="0 0 16 16" className="h-4 w-4" fill="none" aria-hidden="true">
            <path d="M3 3h10M3 8h10M3 13h10M5 1v14M11 1v14" stroke="#2e2e2e" />
            <path d="M1 1h4v4H1zM11 1h4v4h-4zM1 11h4v4H1zM11 11h4v4h-4z" stroke="#2e2e2e" />
          </svg>
          <svg viewBox="0 0 14 16" className="h-3.5 w-3" fill="none" aria-hidden="true">
            <path d="M3 8V5c0-5 8-5 8 0v3" stroke="#303030" />
            <path d="M2 7h10v8H2z" stroke="#303030" />
            <path d="M7 9v4" stroke="#999" strokeWidth="2" />
          </svg>
          <svg viewBox="0 0 16 16" className="ml-0.5 h-[13px] w-[13px]" fill="none" aria-hidden="true">
            <path d="M1 1h14v14H1z" stroke="#e8e8e8" strokeWidth="1.600" />
            <path d="M1 1l5 5M15 1l-5 5M1 15l5-5M15 15l-5-5" stroke="#e8e8e8" strokeWidth="2.500" />
            <circle cx="8" cy="8" r="3" fill="#444" stroke="#e8e8e8" strokeWidth="1.800" />
          </svg>
        </div>
        <Coord axis="X" value="130.715" />
        <Coord axis="Y" value="-45.839" />
        <Coord axis="Z" value="0.0" />
        <span className="pl-1 font-bold whitespace-nowrap">栅格 = 10.0</span>
      </div>
      <div className="absolute top-[29px] left-[1077px] flex items-center gap-1">
        <button
          type="button"
          aria-label="时间标记"
          className="flex h-[17px] w-[17px] items-center justify-center rounded-xs bg-[#5d84bd]"
        >
          <svg viewBox="0 0 12 12" className="h-3 w-3" fill="none" aria-hidden="true">
            <path d="m6 1 5 2.500v5L6 11 1 8.500v-5zM1 3.500 6 6l5-2.500M6 6v5" stroke="#e8e8e8" />
          </svg>
        </button>
        <span className="whitespace-nowrap">添加时间标记</span>
      </div>
      <div className="absolute bottom-0 left-[270px] flex h-6 w-[142px] items-center justify-between rounded-sm border-2 border-[#78a5dd] bg-[#f5f9fe] px-1.5">
        <svg viewBox="0 0 16 16" className="h-[15px] w-[15px]" fill="none" aria-hidden="true">
          <rect width="16" height="16" rx="2" fill="#2f84e8" />
          <circle cx="8" cy="7.500" r="4.500" stroke="#fff" strokeWidth="1.600" />
          <path d="m8 10 4 3" stroke="#fff" strokeWidth="1.600" />
        </svg>
        <span className="text-[12px] leading-4 font-bold text-[#47709c]">英</span>
        <svg viewBox="0 0 12 12" className="h-2.5 w-2.5" aria-hidden="true">
          <path d="M8 0c7 5 1 15-8 10 6 0 9-5 8-10z" fill="#47709c" />
        </svg>
        <svg viewBox="0 0 10 10" className="h-2.5 w-2.5" fill="none" aria-hidden="true">
          <path d="M2 3v2M8 2c1 2 0 3-1 4" stroke="#47709c" strokeWidth="1.600" />
        </svg>
        <svg viewBox="0 0 14 10" className="h-[9px] w-[13px]" fill="none" aria-hidden="true">
          <rect width="14" height="9" rx="1" fill="#5580ac" />
          <path d="M2 2.500h10M2 4.500h10M4 7h6" stroke="#f5f9fe" strokeDasharray="1.500 .8" />
        </svg>
        <svg viewBox="0 0 12 12" className="h-2.5 w-2.5" aria-hidden="true">
          <path d="M5 0h1.500v12H5zM0 6l4-3v6zM8 3l4 3-4 3z" fill="#47709c" />
          <path d="M3 5h6v2H3z" fill="#47709c" />
        </svg>
        <svg viewBox="0 0 12 12" className="h-2.5 w-2.5" aria-hidden="true">
          <path d="M7 0 6 4l2 2 4-1c0 4-3 5-6 4l-3 3-3-2 4-4c-1-3 0-6 3-6z" fill="#47709c" />
        </svg>
      </div>
    </footer>
  );
}

function SiteBadge() {
  return (
    <div className="absolute right-0 bottom-0 flex h-[242px] w-[485px] items-start bg-white pt-[67px] pl-[42px] text-black">
      <svg viewBox="170 230 400 320" className="h-[107px] w-[133px] shrink-0" aria-label="土木工程网">
        <path
          d="M203 368C245 285 340 232 440 237c85 5 135 60 113 130l-12 2c15-60-20-100-85-108C370 252 270 290 203 368z"
          fill="#95c11f"
        />
        <path
          d="M195 395c-5 55 45 93 125 90 110-6 205-62 245-125-10 85-120 172-250 183-95 5-160-60-132-130z"
          fill="#133f96"
        />
        <path d="m208 415 56-27v88c-30-14-48-34-56-61z" fill="#133f96" />
        <path d="m291 315 71-33v203h-71z" fill="url(#tower)" />
        <path d="m370 290 70 35v22l-46 24v94l-24 8z" fill="#dadbdd" />
        <path d="m398 375 60-25v93l-60 27z" fill="#133f96" />
        <path d="m468 357 50 25c-10 20-28 40-50 54z" fill="#dadbdd" />
        <path d="M268 400h18v83l-18-5z" fill="#dadbdd" />
      </svg>
      <div className="pt-3.5">
        <p className="font-['Noto_Sans_CJK_SC',sans-serif] text-[52px] leading-[52px] font-black whitespace-nowrap italic">
          土木工程网
        </p>
        <p className="pt-0.5 font-['Open_Sans',sans-serif] text-[34px] leading-[34px] font-semibold whitespace-nowrap italic">
          www.civilcn.com
        </p>
      </div>
    </div>
  );
}

function Gradients() {
  const radial: [string, string, string][] = [
    ["globe", "#d5e6e2", "#4f7f86"],
    ["dark", "#777777", "#2c2c2c"],
    ["chrome", "#ffffff", "#6a6a6a"],
    ["ice", "#e6f3fb", "#56809f"],
    ["red", "#ff8f85", "#8f1212"],
    ["blue", "#86c2ff", "#16408f"],
    ["cream", "#f7f4c4", "#a39c5c"],
  ];
  return (
    <svg className="absolute h-0 w-0" aria-hidden="true">
      <defs>
        {radial.map(([id, a, b]) => (
          <radialGradient key={id} id={id} cx=".4" cy=".35" r=".65">
            <stop stopColor={a} />
            <stop offset="1" stopColor={b} />
          </radialGradient>
        ))}
        <linearGradient id="metal" x2="1">
          <stop stopColor="#9a9a9a" />
          <stop offset=".5" stopColor="#c2c2c2" />
          <stop offset="1" stopColor="#808080" />
        </linearGradient>
        <linearGradient id="cone" x2="1">
          <stop stopColor="#7d7d7d" />
          <stop offset=".5" stopColor="#f4f4f4" />
          <stop offset="1" stopColor="#7d7d7d" />
        </linearGradient>
        <linearGradient id="tower" x2="0" y2="1">
          <stop stopColor="#133f96" />
          <stop offset=".5" stopColor="#2a5bae" />
          <stop offset="1" stopColor="#5f87c6" />
        </linearGradient>
        <linearGradient id="gridfade" gradientUnits="userSpaceOnUse" x1="0" y1="238" x2="0" y2="760">
          <stop stopColor="#464646" />
          <stop offset=".75" stopColor="#4b4b4b" />
          <stop offset="1" stopColor="#4b4b4b" stopOpacity="0" />
        </linearGradient>
      </defs>
    </svg>
  );
}

export default function App() {
  return (
    <div className="relative flex min-h-screen flex-col overflow-hidden bg-[#444444] font-['Liberation_Sans','Noto_Sans_CJK_SC',sans-serif]">
      <Gradients />
      <MenuBar />
      <Toolbars />
      <div className="flex flex-1">
        <LeftDock />
        <Viewport />
        <CommandPanel />
      </div>
      <Timeline />
      <StatusBar />
      <SiteBadge />
    </div>
  );
}
